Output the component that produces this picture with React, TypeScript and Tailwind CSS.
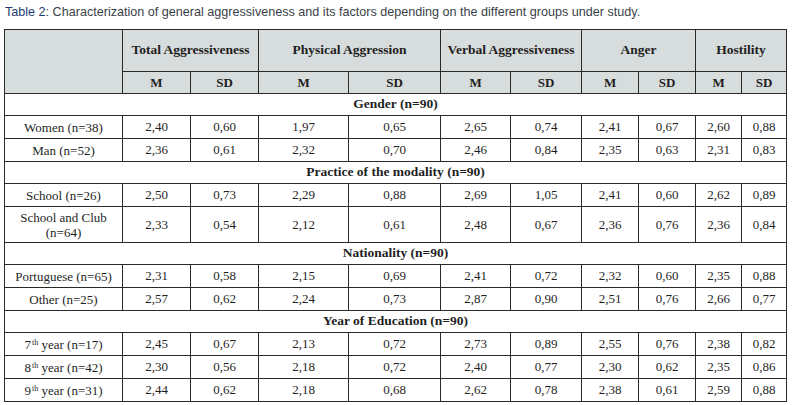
type Row = { label: React.ReactNode; vals: string[]; tall?: boolean }
type Section = { title: string; rows: Row[] }

const Th = ({ n }: { n: string }) => (
  <>
    {n}
    <sup className="text-[8px] leading-none ml-px">th</sup> year
  </>
)

const sections: Section[] = [
  {
    title: 'Gender (n=90)',
    rows: [
      { label: 'Women (n=38)', vals: ['2,40', '0,60', '1,97', '0,65', '2,65', '0,74', '2,41', '0,67', '2,60', '0,88'] },
      { label: 'Man (n=52)', vals: ['2,36', '0,61', '2,32', '0,70', '2,46', '0,84', '2,35', '0,63', '2,31', '0,83'] },
    ],
  },
  {
    title: 'Practice of the modality (n=90)',
    rows: [
      { label: 'School (n=26)', vals: ['2,50', '0,73', '2,29', '0,88', '2,69', '1,05', '2,41', '0,60', '2,62', '0,89'] },
      {
        label: (
          <>
            School and Club
            <br />
            (n=64)
          </>
        ),
        vals: ['2,33', '0,54', '2,12', '0,61', '2,48', '0,67', '2,36', '0,76', '2,36', '0,84'],
        tall: true,
      },
    ],
  },
  {
    title: 'Nationality (n=90)',
    rows: [
      { label: 'Portuguese (n=65)', vals: ['2,31', '0,58', '2,15', '0,69', '2,41', '0,72', '2,32', '0,60', '2,35', '0,88'] },
      { label: 'Other (n=25)', vals: ['2,57', '0,62', '2,24', '0,73', '2,87', '0,90', '2,51', '0,76', '2,66', '0,77'] },
    ],
  },
  {
    title: 'Year of Education (n=90)',
    rows: [
      { label: <><Th n="7" /> (n=17)</>, vals: ['2,45', '0,67', '2,13', '0,72', '2,73', '0,89', '2,55', '0,76', '2,38', '0,82'] },
      { label: <><Th n="8" /> (n=42)</>, vals: ['2,30', '0,56', '2,18', '0,72', '2,40', '0,77', '2,30', '0,62', '2,35', '0,86'] },
      { label: <><Th n="9" /> (n=31)</>, vals: ['2,44', '0,62', '2,18', '0,68', '2,62', '0,78', '2,38', '0,61', '2,59', '0,88'] },
    ],
  },
]

const groups = ['Total Aggressiveness', 'Physical Aggression', 'Verbal Aggressiveness', 'Anger', 'Hostility']
const widths = [118, 68, 68, 90, 92, 70, 71, 57, 57, 46, 45]

const cell = 'border border-[#2a2a2a] text-center align-middle p-0'

export default function App() {
  return (
    <div className="w-[794px] h-[405px] bg-white pl-1 pt-[4px]">
      <p className="text-[12.6px] leading-[16px] text-[#3a3f47] pl-px" style={{ fontFamily: '"Liberation Sans", Arial, sans-serif' }}>
        <span className="text-[#1d3d73]">Table 2</span>: Characterization of general aggressiveness and its factors depending on the different groups under study.
      </p>
      <table
        className="mt-[9px] border-collapse table-fixed text-[13px] text-[#1f1f1f]"
        style={{ fontFamily: '"Liberation Serif", "Times New Roman", serif', width: 783 }}
      >
        <colgroup>
          {widths.map((w, i) => (
            <col key={i} style={{ width: w }} />
          ))}
        </colgroup>
        <thead>
          <tr className="h-[42px] bg-[#d7dcdc]">
            <th rowSpan={2} className={cell}></th>
            {groups.map((g) => (
              <th key={g} colSpan={2} className={cell + ' font-bold text-[13.5px]'}>
                {g}
              </th>
            ))}
          </tr>
          <tr className="h-[22px] bg-[#d7dcdc]">
            {groups.map((g) => (
              <>
                <th key={g + 'm'} className={cell + ' font-bold'}>M</th>
                <th key={g + 's'} className={cell + ' font-bold'}>SD</th>
              </>
            ))}
          </tr>
        </thead>
        <tbody>
          {sections.map((s) => (
            <>
              <tr key={s.title} className="h-[22px]">
                <td colSpan={11} className={cell + ' font-bold text-[13.5px]'}>
                  {s.title}
                </td>
              </tr>
              {s.rows.map((r, i) => (
                <tr key={s.title + i} className={r.tall ? 'h-[36px]' : 'h-[23px]'}>
                  <td className={cell + ' leading-[15px]'}>{r.label}</td>
                  {r.vals.map((v, j) => (
                    <td key={j} className={cell}>
                      {v}
                    </td>
                  ))}
                </tr>
              ))}
            </>
          ))}
        </tbody>
      </table>
    </div>
  )
}
